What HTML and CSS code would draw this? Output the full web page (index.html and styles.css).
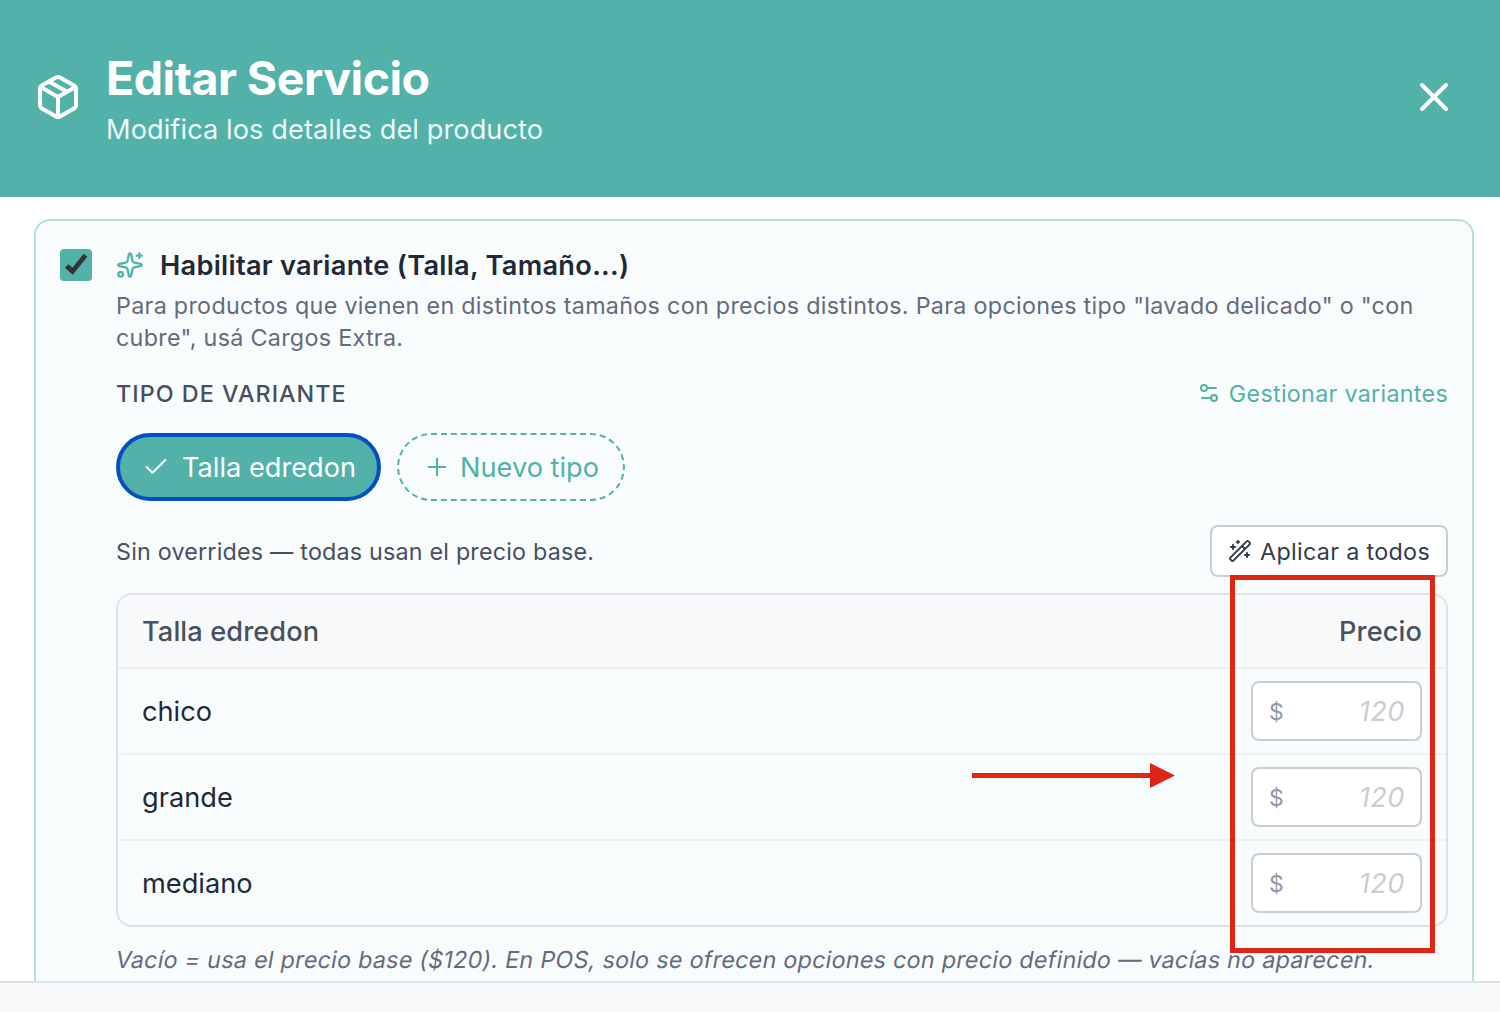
FILE: index.html
```html
<!DOCTYPE html>
<html lang="es">
<head>
    <meta charset="UTF-8">
    <meta name="viewport" content="width=device-width, initial-scale=1.0">
    <title>Editar Servicio</title>
    <link rel="stylesheet" href="styles.css">
</head>
<body>

    <!-- Header -->
    <header class="header">
        <svg class="icon box-icon" viewBox="0 0 24 24">
            <path d="M21 8a2 2 0 0 0-1-1.73l-7-4a2 2 0 0 0-2 0l-7 4A2 2 0 0 0 3 8v8a2 2 0 0 0 1 1.73l7 4a2 2 0 0 0 2 0l7-4A2 2 0 0 0 21 16Z"/>
            <path d="m3.3 7 8.7 5 8.7-5M12 22V12M7.5 4.27l9 5.15"/>
        </svg>
        <div class="header-text">
            <h1>Editar Servicio</h1>
            <p>Modifica los detalles del producto</p>
        </div>
        <button class="close" aria-label="Cerrar">
            <svg class="icon" viewBox="0 0 24 24"><path d="M18 6 6 18M6 6l12 12"/></svg>
        </button>
    </header>

    <!-- Variants -->
    <main class="content">
        <section class="card">
            <span class="checkbox">
                <svg viewBox="0 0 32 32"><path d="M4.8 18.8 8.6 15.2 12.4 18.8 23.6 4.8 27.3 7.8 12.8 25.8z"/></svg>
            </span>
            <div class="card-body">
                <h2>
                    <svg class="icon sparkles" viewBox="0 0 24 24">
                        <path d="M11.017 2.814a1 1 0 0 1 1.966 0l1.051 5.558a2 2 0 0 0 1.594 1.594l5.558 1.051a1 1 0 0 1 0 1.966l-5.558 1.051a2 2 0 0 0-1.594 1.594l-1.051 5.558a1 1 0 0 1-1.966 0l-1.051-5.558a2 2 0 0 0-1.594-1.594l-5.558-1.051a1 1 0 0 1 0-1.966l5.558-1.051a2 2 0 0 0 1.594-1.594zM20 2v4M22 4h-4"/>
                        <circle cx="4" cy="20" r="2"/>
                    </svg>
                    <span>Habilitar variante (Talla, Tamaño...)</span>
                </h2>
                <p class="description">Para productos que vienen en distintos tamaños con precios distintos. Para opciones tipo "lavado delicado" o "con cubre", usá Cargos Extra.</p>

                <div class="row type-row">
                    <span class="label">TIPO DE VARIANTE</span>
                    <a class="manage">
                        <svg class="icon" viewBox="0 0 24 24"><path d="M14 17H5M19 7h-9"/><circle cx="17" cy="17" r="3"/><circle cx="7" cy="7" r="3"/></svg>
                        <span>Gestionar variantes</span>
                    </a>
                </div>

                <div class="chips">
                    <button class="chip selected">
                        <svg class="icon" viewBox="0 0 24 24"><path d="M20 6 9 17l-5-5"/></svg>
                        <span>Talla edredon</span>
                    </button>
                    <button class="chip new">
                        <svg class="icon" viewBox="0 0 24 24"><path d="M5 12h14M12 5v14"/></svg>
                        <span>Nuevo tipo</span>
                    </button>
                </div>

                <div class="row">
                    <span class="status">Sin overrides — todas usan el precio base.</span>
                    <button class="apply">
                        <svg class="icon" viewBox="0 0 24 24">
                            <path d="m21.64 3.64-1.28-1.28a1.21 1.21 0 0 0-1.72 0L2.36 18.64a1.21 1.21 0 0 0 0 1.72l1.28 1.28a1.2 1.2 0 0 0 1.72 0L21.64 5.36a1.2 1.2 0 0 0 0-1.72M14 7l3 3M5 6v4M19 14v4M10 2v2M7 8H3M21 16h-4M11 3H9"/>
                        </svg>
                        <span>Aplicar a todos</span>
                    </button>
                </div>

                <div class="table">
                    <div class="table-row table-head"><span>Talla edredon</span><span>Precio</span></div>
                    <div class="table-row"><span>chico</span><div class="price"><span>$</span><em>120</em></div></div>
                    <div class="table-row"><span>grande</span><div class="price"><span>$</span><em>120</em></div></div>
                    <div class="table-row"><span>mediano</span><div class="price"><span>$</span><em>120</em></div></div>
                </div>

                <p class="note">Vacío = usa el precio base ($120). En POS, solo se ofrecen opciones con precio definido — vacías no aparecen.</p>
            </div>
        </section>
    </main>

    <footer class="footer"></footer>

    <!-- Annotations over the price column -->
    <div class="highlight"></div>
    <svg class="arrow" viewBox="0 0 203 26"><path d="M0 10h178V0l25 12.5L178 25V15H0z"/></svg>

</body>
</html>
```

FILE: styles.css
```css
/* General Styles */
* {
    box-sizing: border-box;
}

body {
    margin: 0;
    height: 1012px;
    display: flex;
    flex-direction: column;
    overflow: hidden;
    position: relative;
    background: #fff;
    color: #1f2937;
    font-family: Inter, "Liberation Sans", sans-serif;
    font-size: 27.2px;
}

h1, h2, p {
    margin: 0;
}

button {
    font: inherit;
    cursor: pointer;
}

.icon {
    flex: none;
    fill: none;
    stroke: currentColor;
    stroke-width: 2;
    stroke-linecap: round;
    stroke-linejoin: round;
}

/* Header */
.header {
    flex: none;
    height: 197px;
    display: flex;
    align-items: center;
    padding: 0 42px 4px 34px;
    background: #52b2aa;
    color: #fff;
}

.box-icon {
    width: 48px;
    height: 48px;
}

.header-text {
    flex: 1;
    margin-left: 24px;
    padding-top: 4px;
}

.header h1 {
    margin-bottom: 2px;
    font-size: 46.5px;
    line-height: 60px;
    font-weight: 700;
    letter-spacing: -0.5px;
}

.header p {
    line-height: 40px;
    letter-spacing: 0.07px;
    opacity: 0.9;
}

.close {
    display: flex;
    padding: 0;
    border: 0;
    background: none;
    color: #fff;
}

.close svg {
    width: 48px;
    height: 48px;
}

/* Card */
.content {
    flex: 1;
    min-height: 0;
    overflow: hidden;
    padding: 22px 26px 0 34px;
}

.card {
    display: flex;
    align-items: flex-start;
    gap: 24px;
    height: 900px;
    padding: 24px;
    border: 2px solid #b5dfdb;
    border-radius: 16px;
    background: #f9fcfd;
}

.checkbox {
    flex: none;
    width: 32px;
    height: 32px;
    margin-top: 4px;
    border-radius: 4px;
    background: #52b2aa;
}

.checkbox svg {
    display: block;
    fill: #333;
}

.card-body {
    flex: 1;
}

h2 {
    display: flex;
    align-items: center;
    gap: 16px;
    height: 40px;
    font-size: 27.2px;
    font-weight: 600;
    letter-spacing: 0.29px;
}

.sparkles {
    width: 28px;
    height: 28px;
    color: #52b2aa;
}

.description {
    margin-top: 5px;
    font-size: 23.3px;
    line-height: 32px;
    letter-spacing: 0.3px;
    color: #646b7b;
}

.row {
    display: flex;
    justify-content: space-between;
    align-items: center;
    font-size: 23.3px;
    letter-spacing: 0.2px;
}

.type-row {
    height: 32px;
    margin-top: 23px;
}

.label {
    font-weight: 500;
    letter-spacing: 1.05px;
    color: #465060;
}

.manage {
    display: flex;
    align-items: center;
    gap: 8px;
    letter-spacing: 0.29px;
    color: #52b2aa;
}

.manage svg {
    width: 24px;
    height: 24px;
}

/* Chips */
.chips {
    display: flex;
    gap: 16px;
    margin: 24px 0;
}

.chip {
    display: flex;
    align-items: center;
    height: 68px;
    padding: 0 24px;
    border-radius: 34px;
    white-space: nowrap;
}

.chip.selected {
    width: 265px;
    gap: 12px;
    padding: 0 20px 0 22px;
    border: 4px solid #0550c0;
    background: #52b2aa;
    color: #fff;
}

.chip.new {
    width: 228px;
    gap: 9px;
    border: 2px dashed #52b2aa;
    background: none;
    color: #52b2aa;
}

.chip svg {
    width: 28px;
    height: 28px;
    stroke-width: 1.8;
}

.status {
    color: #465060;
}

.apply {
    display: flex;
    align-items: center;
    gap: 8px;
    width: 238px;
    height: 52px;
    padding: 0 16px;
    border: 2px solid #c9ccd5;
    border-radius: 8px;
    background: #fff;
    color: #323c4c;
    letter-spacing: 0.33px;
    white-space: nowrap;
}

.apply svg {
    width: 24px;
    height: 24px;
}

/* Price table */
.table {
    margin-top: 16px;
    border: 2px solid #dfe1e7;
    border-radius: 16px;
    overflow: hidden;
}

.table-row {
    display: flex;
    justify-content: space-between;
    align-items: center;
    height: 86px;
    padding: 0 24px;
    border-bottom: 2px solid #eef0f3;
}

.table-row:last-child {
    height: 84px;
    border-bottom: 0;
}

.table-head {
    height: 74px;
    background: #f8f9fb;
    font-weight: 500;
    letter-spacing: 0.1px;
    color: #465060;
}

.price {
    display: flex;
    justify-content: space-between;
    align-items: center;
    width: 171px;
    height: 60px;
    padding: 0 15px 0 16px;
    border: 2px solid #c9ccd5;
    border-radius: 8px;
    background: #fff;
    color: #c9ccd5;
    letter-spacing: 0.5px;
}

.price span {
    padding-top: 2px;
    font-size: 23px;
    color: #9299a6;
}

/* Skewed so the slanted text keeps the upright letter shapes */
.note {
    margin-top: 17px;
    font-size: 23.3px;
    line-height: 32px;
    letter-spacing: 0.265px;
    transform: skewX(-10deg);
    white-space: nowrap;
    color: #646b7b;
}

/* Footer */
.footer {
    flex: none;
    height: 31px;
    border-top: 2px solid #dfe1e7;
    background: #f8f9fb;
}

/* Annotations */
.highlight {
    position: absolute;
    left: 1230px;
    top: 575px;
    width: 205px;
    height: 378px;
    border: 5px solid #de2516;
}

.arrow {
    position: absolute;
    left: 972px;
    top: 763px;
    width: 203px;
    height: 26px;
    fill: #de2516;
}
```
